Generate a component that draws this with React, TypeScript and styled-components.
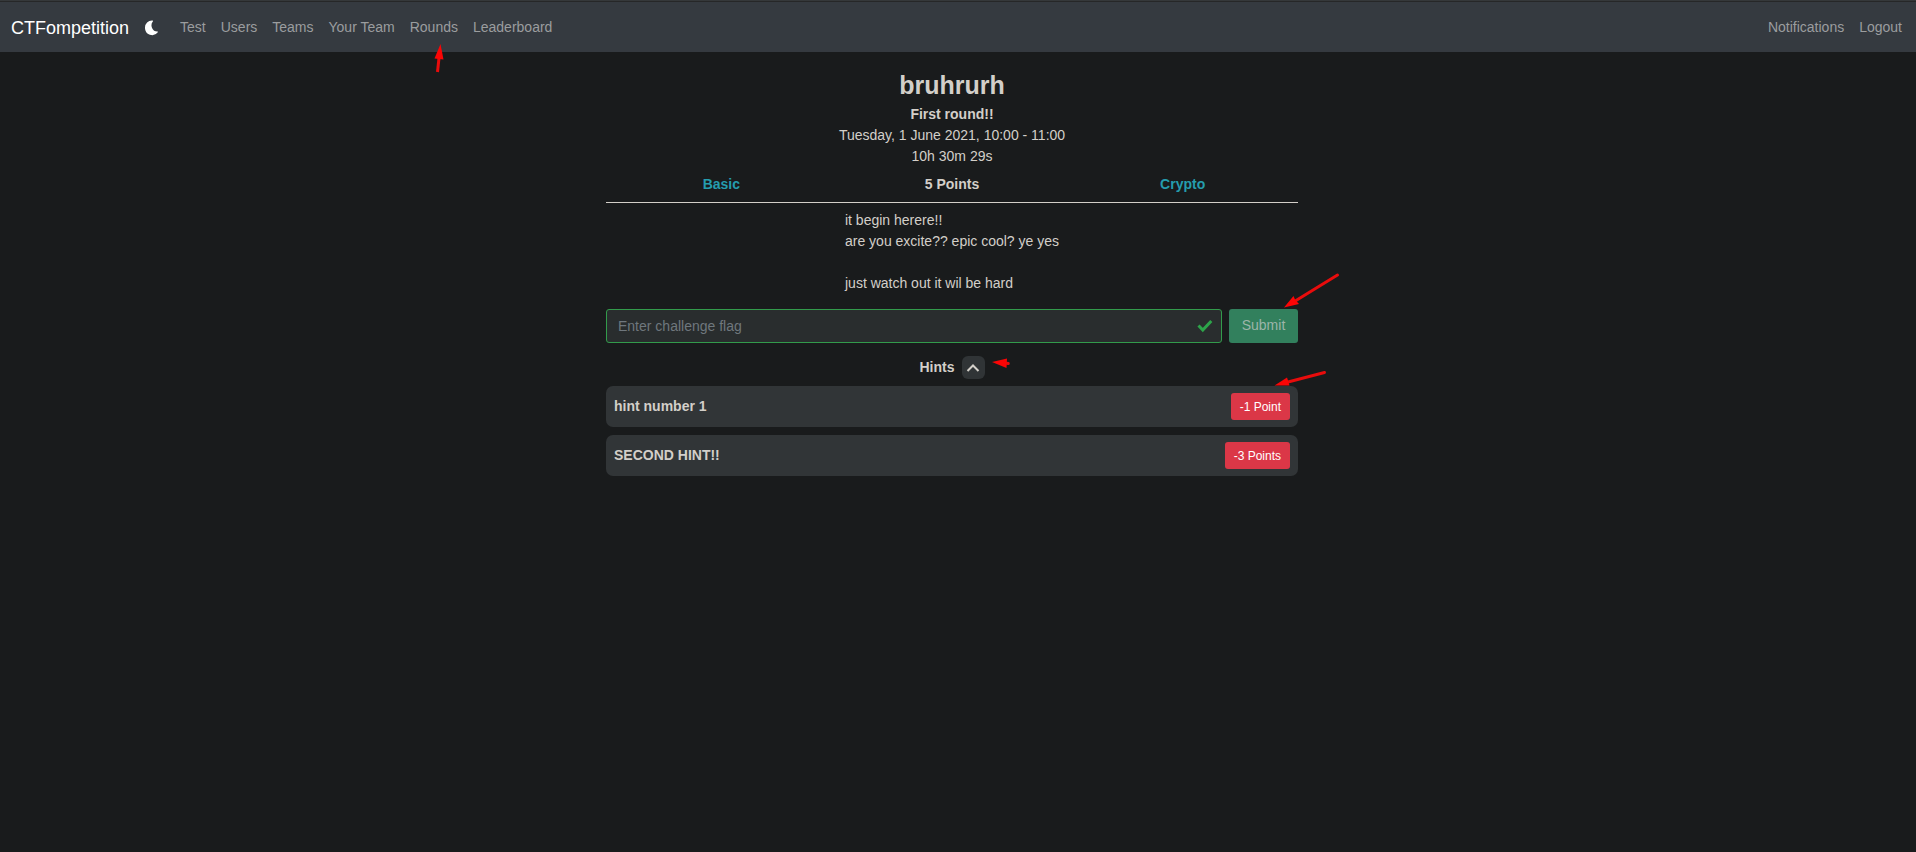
import React, { useState } from "react";
import styled, { createGlobalStyle } from "styled-components";

const GlobalStyle = createGlobalStyle`
  *, *::before, *::after { box-sizing: border-box; }
  body {
    margin: 0;
    min-height: 100vh;
    background: #191b1c;
    color: #d3cfc9;
    font-family: "Liberation Sans", Arial, sans-serif;
    font-size: 14px;
    line-height: 21px;
  }
`;

const Navbar = styled.nav`
  display: flex;
  align-items: center;
  height: 52px;
  padding: 2px 14px 0 11px;
  background: #353a40;
  border-top: 1px solid #35383a;
  box-shadow: inset 0 1px 0 #262728;
`;

const Brand = styled.a`
  color: #fff;
  font-size: 18px;
  line-height: 26px;
  text-decoration: none;
`;

const ThemeButton = styled.button`
  display: flex;
  padding: 0;
  margin: 0 21px 0 15px;
  border: 0;
  background: none;
  color: #fff;
`;

const NavList = styled.ul`
  display: flex;
  gap: 15px;
  margin: 0;
  padding: 0;
  list-style: none;

  & + & { margin-left: auto; }
`;

const NavItem = styled.li`
  position: relative;
`;

const NavLink = styled.a`
  color: #9b9d9f;
  text-decoration: none;
`;

const Page = styled.main`
  padding: 18px 12px 24px 0;
`;

const Content = styled.div`
  width: 100%;
  max-width: 692px;
  margin: 0 auto;
`;

const Header = styled.header`
  text-align: center;
`;

const Title = styled.h1`
  margin: 0 0 4px;
  font-size: 25px;
  line-height: 30px;
`;

const Subtitle = styled.h2`
  margin: 0;
  font-size: 14px;
  line-height: 21px;
`;

const Line = styled.p`
  margin: 0;
`;

const Meta = styled.div`
  display: grid;
  grid-template-columns: repeat(3, 1fr);
  padding: 7px 0;
  border-bottom: 1px solid #d3cfc9;
  font-weight: bold;
  text-align: center;
`;

const MetaLink = styled.a`
  color: #259dae;
  text-decoration: none;
`;

const Description = styled.p`
  width: fit-content;
  margin: 7px auto 15px;
  white-space: pre-line;
`;

const FlagForm = styled.form`
  display: flex;
  gap: 7px;
`;

const FlagField = styled.label`
  position: relative;
  flex: 1;
`;

const FlagInput = styled.input`
  display: block;
  width: 100%;
  height: 34px;
  padding: 0 32px 0 11px;
  border: 1px solid #329b4b;
  border-radius: 3px;
  outline: none;
  background: #292d2e;
  color: #d3cfc9;
  font: inherit;

  &::placeholder { color: #6f777d; opacity: 1; }
`;

const ValidMark = styled.svg`
  position: absolute;
  top: 10px;
  right: 9px;
`;

const SubmitWrap = styled.div`
  position: relative;
`;

const SubmitButton = styled.button`
  height: 34px;
  min-width: 69px;
  padding: 0 11px 2px;
  border: 0;
  border-radius: 3px;
  background: #32805d;
  color: #9cb5a9;
  font: inherit;
`;

const HintsHeader = styled.div`
  display: flex;
  align-items: center;
  justify-content: center;
  gap: 7px;
  margin: 13px 0 7px;
`;

const ToggleWrap = styled.div`
  position: relative;
`;

const HintsTitle = styled.h3`
  margin: 0;
  font-size: 14px;
  line-height: 21px;
`;

const Toggle = styled.button`
  display: grid;
  place-items: center;
  width: 23px;
  height: 23px;
  padding: 0;
  border: 0;
  border-radius: 6px;
  background: #303436;
  color: #d3cfc9;
`;

const HintList = styled.ul`
  display: grid;
  gap: 8px;
  margin: 0;
  padding: 0;
  list-style: none;
`;

const HintRow = styled.li`
  position: relative;
  display: flex;
  align-items: center;
  justify-content: space-between;
  height: 41px;
  padding: 0 8px;
  border-radius: 7px;
  background: #313537;
  font-weight: bold;
`;

const BuyButton = styled.button`
  height: 27px;
  padding: 0 9px;
  border: 0;
  border-radius: 3px;
  background: #db3747;
  color: #fff;
  font: 12px/18px "Liberation Sans", Arial, sans-serif;
`;

const Pointer = styled.svg<{ $top: number; $left?: number; $right?: number }>`
  position: absolute;
  z-index: 1;
  top: ${(p) => p.$top}px;
  left: ${(p) => (p.$left === undefined ? "auto" : `${p.$left}px`)};
  right: ${(p) => (p.$right === undefined ? "auto" : `${p.$right}px`)};
  pointer-events: none;
  fill: #fb0505;
  stroke: #e80c0c;
  stroke-linecap: round;
`;

const links = ["Test", "Users", "Teams", "Your Team", "Rounds", "Leaderboard"];
const hints = [
  { title: "hint number 1", cost: "-1 Point" },
  { title: "SECOND HINT!!", cost: "-3 Points" },
];

export default function App() {
  const [open, setOpen] = useState(true);
  const [flag, setFlag] = useState("");

  return (
    <>
      <GlobalStyle />
      <Navbar>
        <Brand href="#">CTFompetition</Brand>
        <ThemeButton type="button" aria-label="Toggle dark mode">
          <svg width="15" height="16" viewBox="0 0 15 16" fill="currentColor">
            <path d="M8.5 0.6A7 7 0 0 0 1 8a7.1 7.1 0 0 0 12.8 4.3c.3-.4 0-.8-.5-.7A6.3 6.3 0 0 1 8.800 1.500c.5-.3.3-.9-.3-.9Z" />
          </svg>
        </ThemeButton>
        <NavList>
          {links.map((name) => (
            <NavItem key={name}>
              <NavLink href="#">{name}</NavLink>
              {name === "Rounds" && (
                <Pointer $top={26} $left={22} width="14" height="30" viewBox="0 0 14 30" aria-hidden="true">
                  <path d="M5.500 29 7 15" strokeWidth="3" strokeLinecap="butt" />
                  <path d="M8.500 1 11.500 16.500 2.500 15.500Z" stroke="none" />
                </Pointer>
              )}
            </NavItem>
          ))}
        </NavList>
        <NavList>
          <NavItem><NavLink href="#">Notifications</NavLink></NavItem>
          <NavItem><NavLink href="#">Logout</NavLink></NavItem>
        </NavList>
      </Navbar>
      <Page>
        <Content>
          <Header>
            <Title>bruhrurh</Title>
            <Subtitle>First round!!</Subtitle>
            <Line>Tuesday, 1 June 2021, 10:00 - 11:00</Line>
            <Line>10h 30m 29s</Line>
          </Header>
          <Meta>
            <MetaLink href="#">Basic</MetaLink>
            <span>5 Points</span>
            <MetaLink href="#">Crypto</MetaLink>
          </Meta>
          <Description>
            {"it begin herere!!\nare you excite?? epic cool? ye yes\n\njust watch out it wil be hard"}
          </Description>
          <FlagForm onSubmit={(e) => e.preventDefault()}>
            <FlagField>
              <FlagInput
                type="text"
                aria-label="Challenge flag"
                placeholder="Enter challenge flag"
                value={flag}
                onChange={(e) => setFlag(e.target.value)}
              />
              <ValidMark width="16" height="14" viewBox="0 0 16 14" fill="none" stroke="#2da44a" strokeWidth="3" aria-hidden="true">
                <path d="M1.500 6.500 5.800 11 14.300 2" />
              </ValidMark>
            </FlagField>
            <SubmitWrap>
              <SubmitButton type="submit">Submit</SubmitButton>
              <Pointer $top={-38} $left={53} width="60" height="40" viewBox="0 0 60 40" aria-hidden="true">
                <path d="M55.500 4 14 29.500" strokeWidth="3" />
                <path d="M2 36.500 11.500 25 13 28.500 17 33Z" stroke="none" />
              </Pointer>
            </SubmitWrap>
          </FlagForm>
          <HintsHeader>
            <HintsTitle>Hints</HintsTitle>
            <ToggleWrap>
              <Toggle type="button" aria-label="Toggle hints" aria-expanded={open} onClick={() => setOpen(!open)}>
                <svg width="14" height="10" viewBox="0 0 14 10" fill="none" stroke="currentColor" strokeWidth="2">
                  <path d={open ? "M1.500 8 7 2.500 12.500 8" : "M1.500 2.500 7 8 12.500 2.500"} />
                </svg>
              </Toggle>
              <Pointer $top={0} $left={29} width="22" height="14" viewBox="0 0 22 14" aria-hidden="true">
                <path d="M14 7 17.300 7.500" strokeWidth="3" />
                <path d="M1 6 16 2.500 15.500 12Z" stroke="none" />
              </Pointer>
            </ToggleWrap>
          </HintsHeader>
          {open && (
            <HintList>
              {hints.map((hint, i) => (
                <HintRow key={hint.title}>
                  <span>{hint.title}</span>
                  <BuyButton type="button">{hint.cost}</BuyButton>
                  {i === 0 && (
                    <Pointer $top={-18} $right={-32} width="60" height="22" viewBox="0 0 60 22" aria-hidden="true">
                      <path d="M54.500 4.500 18 14" strokeWidth="3" />
                      <path d="M4.500 17.500 17 9.500 19.500 17.500Z" stroke="none" />
                    </Pointer>
                  )}
                </HintRow>
              ))}
            </HintList>
          )}
        </Content>
      </Page>
    </>
  );
}
